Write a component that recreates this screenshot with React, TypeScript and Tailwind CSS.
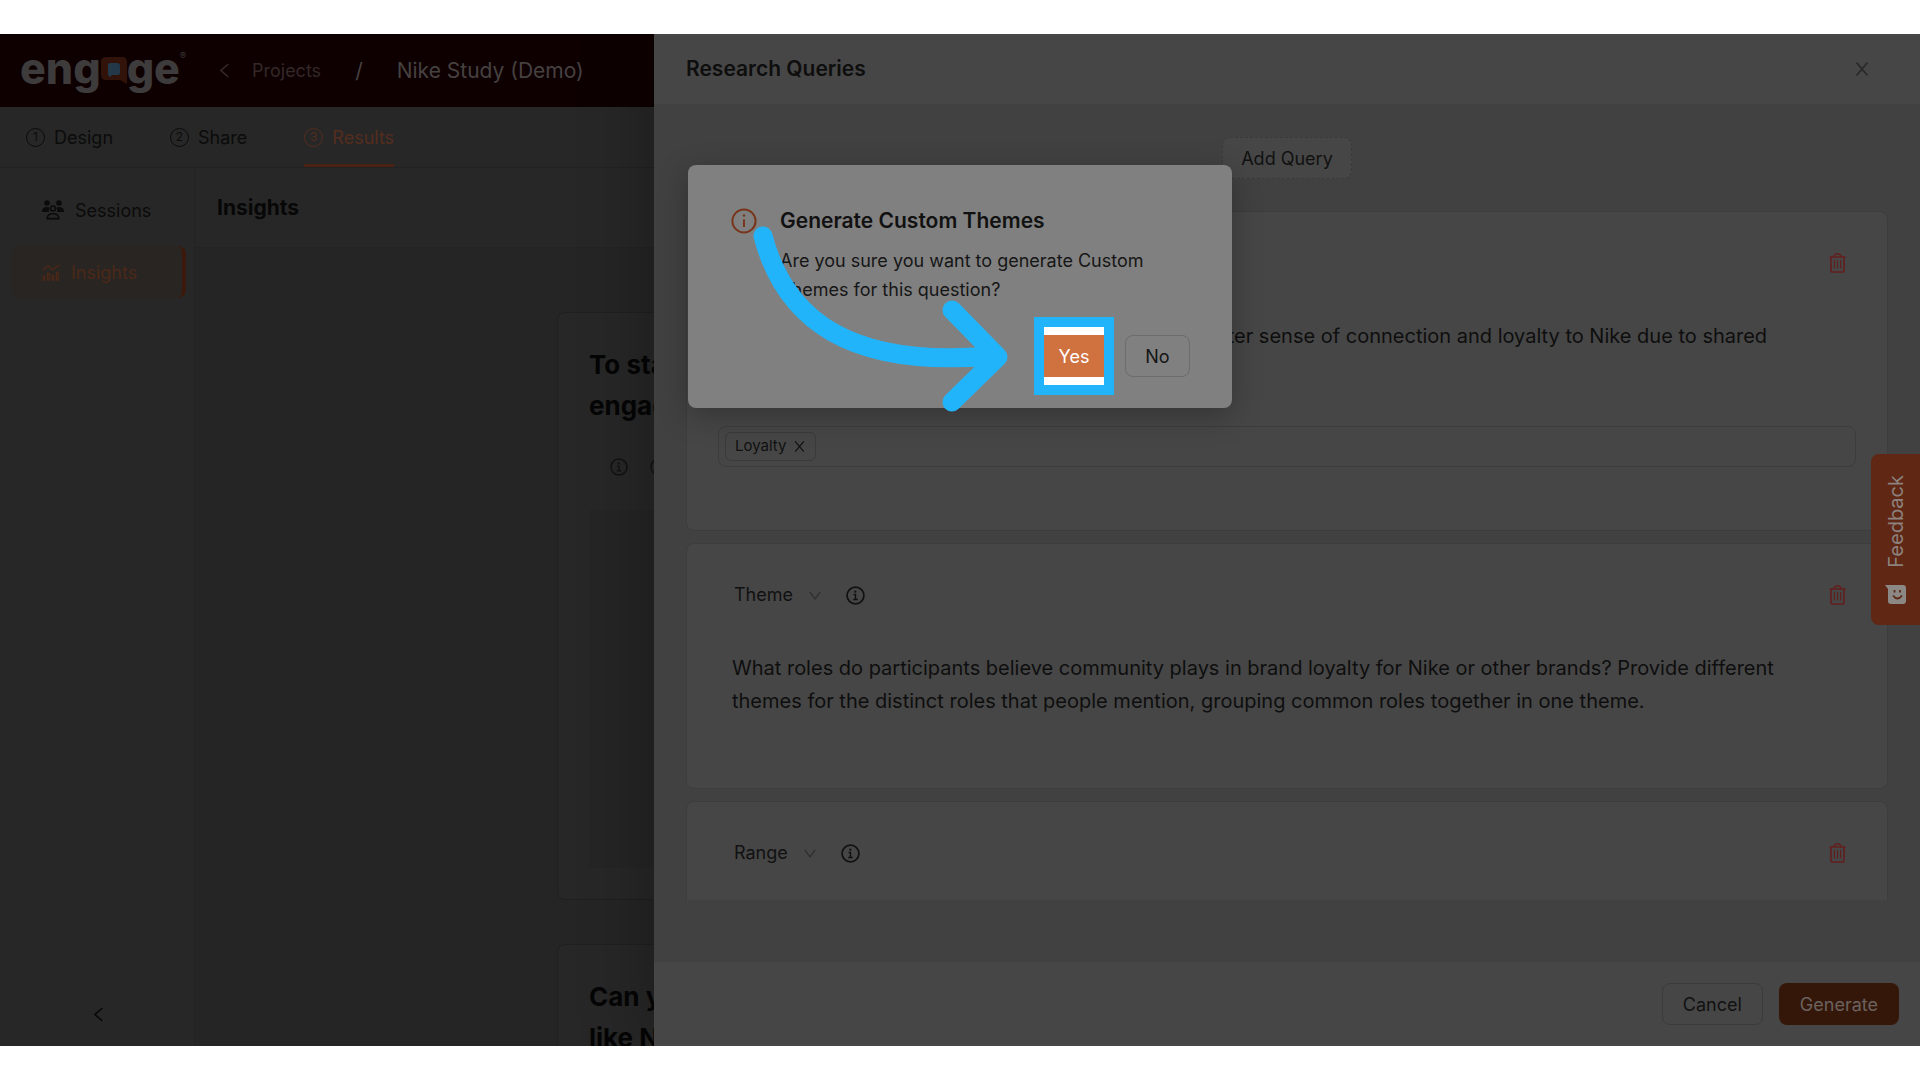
import type { ReactNode } from "react";

function InfoIcon({ size, thin }: { size: number; thin?: boolean }) {
  return (
    <svg width={size} height={size} viewBox="0 0 20 20" fill="none" stroke="currentColor" strokeWidth={thin ? 1.5 : 1.8}>
      <circle cx="10" cy="10" r="8.9" />
      {thin ? (
        <>
          <path d="M10 8.6v6" />
          <circle cx="10" cy="5.8" r="0.9" fill="currentColor" stroke="none" />
        </>
      ) : (
        <>
          <path d="M8 9h2v5M7.6 14.2h4.8" strokeWidth="1.5" />
          <circle cx="9.8" cy="6" r="1.2" fill="currentColor" stroke="none" />
        </>
      )}
    </svg>
  );
}

function TrashIcon() {
  return (
    <svg width="17" height="20" viewBox="0 0 17 20" fill="none" stroke="currentColor" strokeWidth="1.6">
      <path d="M0.5 4h16M4.5 4L6 1.6Q6.4 1 7 1h3q0.6 0 1 0.6L12.5 4M2 4v13.2Q2 19 3.8 19h9.4q1.8 0 1.8-1.8V4" />
      <path d="M5.4 7v8.5M8.5 7v8.5M11.6 7v8.5" strokeWidth="1.1" />
    </svg>
  );
}

function CloseIcon({ size }: { size: number }) {
  return (
    <svg width={size} height={size} viewBox="0 0 14 14" fill="none" stroke="currentColor" strokeWidth="1.5">
      <path d="M1.5 0.5l11 13M12.5 0.5l-11 13" />
    </svg>
  );
}

function ChevronLeft() {
  return (
    <svg width="9" height="15" viewBox="0 0 9 15" fill="none" stroke="currentColor" strokeWidth="1.6">
      <path d="M8.3 1L1 7.5 8.3 14" />
    </svg>
  );
}

function Logo() {
  return (
    <a
      href="#"
      className="mt-4 flex h-9 w-[167px] items-center self-start text-[43px] leading-9 font-extrabold text-[#3d3b3b]"
      aria-label="engage"
    >
      <span>eng</span>
      <svg width="26" height="27" viewBox="0 0 26 27" className="mt-1 shrink-0">
        <path d="M5 0h16q5 0 5 5v22l-7-4H5q-5 0-5-5V5q0-5 5-5z" fill="#32130a" />
        <path d="M9 6h7q3 0 3 3v7q0 2-3 2h-5l-2 2-2-2V8q0-2 2-2z" fill="#23394a" />
      </svg>
      <span>ge</span>
      <span className="self-start text-[9px] leading-3 font-normal">®</span>
    </a>
  );
}

const steps = [
  { n: "1", label: "Design", active: false },
  { n: "2", label: "Share", active: false },
  { n: "3", label: "Results", active: true },
];

function StepTab({ n, label, active }: { n: string; label: string; active: boolean }) {
  return (
    <a
      href="#"
      className={
        active
          ? "flex h-full items-center gap-[9px] border-b-3 border-[#4a2213] pt-[3px] text-[#552d1e]"
          : "flex h-full items-center gap-[9px] text-[#0b0b0b]"
      }
    >
      <span className="flex size-[19px] items-center justify-center rounded-full border border-current text-[12px] leading-none">
        {n}
      </span>
      {label}
    </a>
  );
}

function InsightCard({ lines, children }: { lines: string[]; children?: ReactNode }) {
  return (
    <section className="mx-auto w-full max-w-[1001px] rounded-lg border border-[#202020] bg-[#272727] px-[31px] pt-[31px] pb-[31px]">
      <h2 className="text-[26px] leading-[41px] font-bold text-[#050505]">
        {lines.map((l) => (
          <span key={l} className="block">
            {l}
          </span>
        ))}
      </h2>
      {children}
    </section>
  );
}

function QueryCard({
  type,
  text,
  tag,
  className,
}: {
  type: string;
  text: string;
  tag?: string;
  className?: string;
}) {
  return (
    <article className={"shrink-0 rounded-lg border border-[#3d3d3d] bg-[#464646] px-[31px] pt-[31px] " + (className ?? "")}>
      <div className="flex h-10 items-center pr-[10px] pl-4 text-[#111]">
        <button type="button" className="flex items-center gap-4 text-[18px] leading-6">
          {type}
          <svg width="12" height="9" viewBox="0 0 12 9" fill="none" stroke="#303030" strokeWidth="1.3">
            <path d="M0.7 0.8L6 8l5.3-7.2" />
          </svg>
        </button>
        <button type="button" aria-label={"About " + type} className="ml-[25px]">
          <InfoIcon size={19} />
        </button>
        <button type="button" aria-label="Delete query" className="ml-auto text-[#621f1e]">
          <TrashIcon />
        </button>
      </div>
      <textarea
        aria-label="Query"
        rows={2}
        defaultValue={text}
        className="mt-[37px] block w-full resize-none overflow-hidden px-[14px] text-[20px] leading-[33px] text-[#0e0e0e] outline-none"
      />
      {tag && (
        <div className="mt-10 flex h-[41px] items-center rounded-lg border border-[#3c3c3c] px-[6px]">
          <span className="flex h-[29px] items-center gap-[7px] rounded-md border border-[#3a3a3a] px-[9px] text-[15px] text-[#111]">
            {tag}
            <button type="button" aria-label={"Remove " + tag} className="px-px">
              <CloseIcon size={11} />
            </button>
          </span>
        </div>
      )}
    </article>
  );
}

function ConfirmDialog() {
  return (
    <div className="absolute inset-x-0 top-[131px] flex justify-center">
      <div
        role="dialog"
        aria-labelledby="confirm-title"
        className="flex w-[544px] gap-[23px] rounded-lg bg-[#808080] pt-10 pr-[42px] pb-[31px] pl-[43px] shadow-[0_8px_30px_rgba(0,0,0,0.25)]"
      >
        <span className="mt-[3px] shrink-0 text-[#783419]">
          <InfoIcon size={26} thin />
        </span>
        <div className="flex-1">
          <h2 id="confirm-title" className="text-[21px] leading-8 font-semibold text-[#111]">
            Generate Custom Themes
          </h2>
          <p className="mt-[9px] text-[18px] leading-[29px] text-[#161616]">
            Are you sure you want to generate Custom Themes for this question?
          </p>
          <div className="mt-[31px] flex justify-end gap-[21px] text-[18px]">
            <div className="relative w-[60px]">
              <button type="button" className="h-[42px] w-full bg-[#d0723f] text-white">
                Yes
              </button>
              <span className="pointer-events-none absolute -inset-x-[10px] -inset-y-[18px] border-[10px] border-[#22b4fa]" />
              <span className="pointer-events-none absolute inset-x-0 -top-2 h-2 bg-white" />
              <span className="pointer-events-none absolute inset-x-0 -bottom-2 h-2 bg-white" />
            </div>
            <button type="button" className="h-[42px] w-[65px] rounded-lg border border-[#6c6c6c] text-[#141414]">
              No
            </button>
          </div>
        </div>
        <svg
          width="260"
          height="200"
          viewBox="750 220 260 200"
          fill="none"
          stroke="#22b4fa"
          strokeWidth="19"
          strokeLinecap="round"
          strokeLinejoin="round"
          className="pointer-events-none absolute top-[55px] left-1/2 -ml-[210px]"
        >
          <path d="M763 236C785 320 850 368 990 356M952 310l46 47-46 45" />
        </svg>
      </div>
    </div>
  );
}

export default function App() {
  return (
    <div className="flex h-screen flex-col overflow-hidden bg-white py-[34px] font-[Inter,sans-serif]">
      <div className="relative flex min-h-0 flex-1 flex-col overflow-hidden bg-[#252525]">
        <header className="flex h-[73px] shrink-0 items-center bg-[#0e0000] pr-8 pl-5 text-[#464141]">
          <Logo />
          <nav className="ml-[33px] flex items-center text-[21px]">
            <a href="#" className="flex items-center gap-[23px] text-[18px] text-[#332828]">
              <ChevronLeft />
              Projects
            </a>
            <span className="mx-[34px]">/</span>
            <span>Nike Study (Demo)</span>
          </nav>
        </header>

        <nav className="flex h-[61px] shrink-0 items-center gap-[57px] border-b border-[#222] bg-[#272727] pl-[26px] text-[18px]">
          {steps.map((s) => (
            <StepTab key={s.n} {...s} />
          ))}
        </nav>

        <div className="flex min-h-0 flex-1">
          <aside className="flex w-[195px] shrink-0 flex-col border-r border-[#232323] bg-[#272727] pt-4 pr-2 pb-6 pl-[11px] text-[18px]">
            <a href="#" className="flex h-[52px] items-center gap-[11px] pl-[31px] text-[#0b0b0b]">
              <svg width="22" height="20" viewBox="0 0 22 20" fill="currentColor">
                <circle cx="5" cy="3" r="2.8" />
                <circle cx="17" cy="3" r="2.8" />
                <path d="M0 12q0-5 5-5 2 0 2.6 1-1.6 2-.6 4zM22 12q0-5-5-5-2 0-2.6 1 1.6 2 .6 4z" />
                <circle cx="11" cy="8.6" r="2.5" fill="none" stroke="currentColor" strokeWidth="1.5" />
                <path d="M5.2 18.6q0-4.8 5.8-4.8t5.8 4.8z" fill="none" stroke="currentColor" strokeWidth="1.6" />
              </svg>
              Sessions
            </a>
            <a
              href="#"
              className="mt-[10px] flex h-[52px] items-center gap-[11px] rounded-lg border-r-4 border-[#3c190c] bg-[#292522] pl-[31px] text-[#4c2818]"
            >
              <svg width="18" height="17" viewBox="0 0 18 17" fill="none" stroke="currentColor" strokeWidth="1.5">
                <path d="M0.5 6.5L6 1.8l4.5 4L17.5 0.8" />
                <path d="M1 12.5h1.8v3.5H1zM5.5 9.5h1.8V16H5.5zM10 11.5h1.8V16H10zM14.5 8.5h1.8V16h-1.8z" strokeWidth="1.3" />
              </svg>
              Insights
            </a>
            <button type="button" aria-label="Collapse sidebar" className="mx-auto mt-auto text-[#080808]">
              <ChevronLeft />
            </button>
          </aside>

          <main className="flex min-w-0 flex-1 flex-col">
            <h1 className="flex h-[80px] shrink-0 items-center border-b border-[#232323] bg-[#272727] pl-[22px] text-[21px] font-bold text-[#070707]">
              Insights
            </h1>
            <div className="flex min-h-0 flex-1 flex-col gap-[44px] overflow-hidden pt-16">
              <InsightCard lines={["To start, what does being part of a", "engaged community mean to you?"]}>
                <div className="mt-8 flex items-center gap-[22px] pl-[21px] text-[#131313]">
                  <InfoIcon size={18} />
                  <InfoIcon size={18} />
                </div>
                <div className="mt-[34px] h-[358px] bg-[#252525]" />
              </InsightCard>
              <InsightCard lines={["Can you tell us how brands", "like Nike bring people together?"]} />
            </div>
          </main>
        </div>

        <aside className="absolute inset-y-0 right-0 flex w-[1266px] flex-col bg-[#414141] shadow-[-9px_0_60px_rgba(0,0,0,0.25)]">
          <div className="flex h-[70px] shrink-0 items-center justify-between bg-[#464646] pr-[51px] pl-8">
            <h2 className="text-[21px] font-semibold text-[#0e0e0e]">Research Queries</h2>
            <button type="button" aria-label="Close" className="text-[#272727]">
              <CloseIcon size={14} />
            </button>
          </div>
          <div className="flex min-h-0 flex-1 flex-col px-8 pt-[33px] pb-[62px]">
            <button
              type="button"
              className="mx-auto h-[42px] shrink-0 rounded-lg border border-dashed border-[#3a3a3a] bg-[#464646] px-[18px] text-[18px] text-[#111]"
            >
              Add Query
            </button>
            <div className="mt-8 flex min-h-0 flex-1 flex-col gap-3 overflow-hidden">
              <QueryCard
                type="Theme"
                text="Do participants who belong to a community get greater sense of connection and loyalty to Nike due to shared experiences?"
                tag="Loyalty"
                className="pb-[63px]"
              />
              <QueryCard
                type="Theme"
                text="What roles do participants believe community plays in brand loyalty for Nike or other brands? Provide different themes for the distinct roles that people mention, grouping common roles together in one theme."
                className="pb-[70px]"
              />
              <QueryCard type="Range" text="" className="pb-[70px]" />
            </div>
          </div>
          <div className="flex h-[84px] shrink-0 items-center justify-end gap-4 bg-[#464646] pr-[21px] text-[18px]">
            <button type="button" className="h-[42px] rounded-lg border border-[#3b3b3b] px-5 text-[#111]">
              Cancel
            </button>
            <button type="button" className="h-[42px] rounded-lg bg-[#35170a] px-[21px] text-[#6b625f]">
              Generate
            </button>
          </div>
        </aside>

        <button
          type="button"
          className="absolute top-[420px] right-0 flex h-[171px] w-[49px] flex-col items-center justify-center gap-[18px] rounded-l-lg bg-[#5f2714] text-[20px] text-[#8c817d]"
        >
          <span className="rotate-180 [writing-mode:vertical-rl]">Feedback</span>
          <svg width="21" height="19" viewBox="0 0 21 19">
            <path d="M0 0h18q3 0 3 3v13q0 3-3 3H6q-3 0-3-3V4z" fill="#8c8886" />
            <path d="M8 10.5q4.5 6 9 0M9.5 5v2.5M15 5v2.5" fill="none" stroke="#5f2714" strokeWidth="1.8" />
          </svg>
        </button>

        <ConfirmDialog />
      </div>
    </div>
  );
}
